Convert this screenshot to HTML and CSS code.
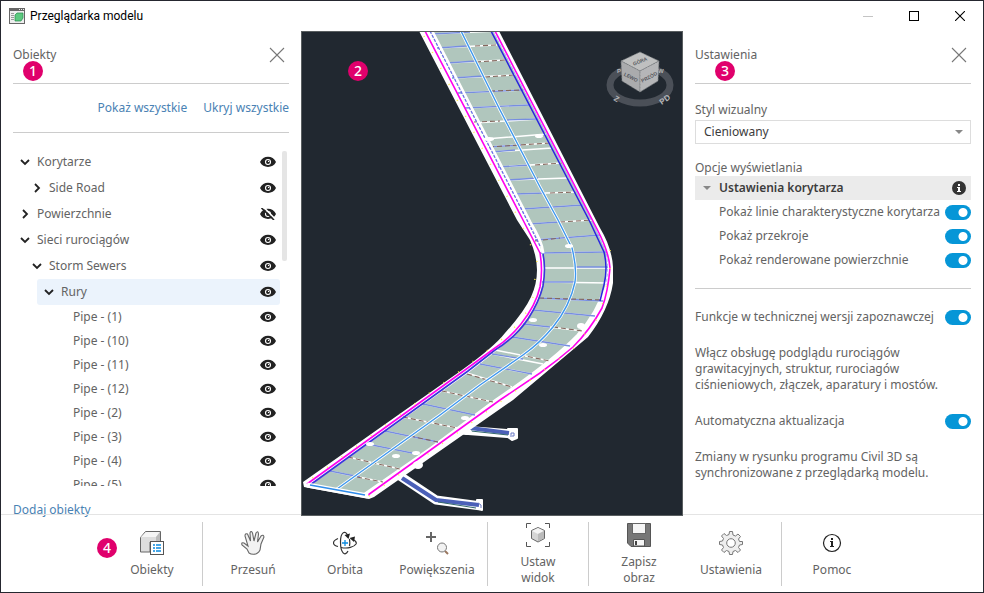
FILE: index.html
```html
<!DOCTYPE html>
<html lang="pl">
<head>
<meta charset="utf-8">
<title>Przeglądarka modelu</title>
<link rel="stylesheet" href="styles.css">
</head>
<body>
<svg class="defs" aria-hidden="true">
  <symbol id="eye" viewBox="0 0 16 12"><path d="M0 6C3 -1 13 -1 16 6C13 12.500 3 12.500 0 6Z" fill="#222"/><circle cx="8" cy="6" r="2.500" fill="none" stroke="#fff" stroke-width="1.100"/><circle cx="8.600" cy="5.400" r=".7" fill="#fff"/></symbol>
  <symbol id="eye-off" viewBox="0 0 16 12"><path d="M0 6C3 -1 13 -1 16 6C13 12.500 3 12.500 0 6Z" fill="#222"/><circle cx="8" cy="6" r="2.500" fill="none" stroke="#fff" stroke-width="1.100"/><path d="M3.500 -1L15.500 11.500" stroke="#fff" stroke-width="1.600"/><path d="M1.500 0L14 12" stroke="#222" stroke-width="1.600"/></symbol>
  <symbol id="down" viewBox="0 0 10 10"><path d="M1 3L5 7L9 3" fill="none" stroke="#222" stroke-width="1.800"/></symbol>
  <symbol id="right" viewBox="0 0 10 10"><path d="M3 1L7 5L3 9" fill="none" stroke="#222" stroke-width="1.800"/></symbol>
  <symbol id="close" viewBox="0 0 16 16"><path d="M1 1L15 15M15 1L1 15" stroke="#777" stroke-width="1.100"/></symbol>
</svg>
<div class="window">
  <header class="titlebar">
    <svg class="app-icon" width="16" height="16" viewBox="0 0 16 16"><rect x=".5" y=".5" width="15" height="15" fill="#eee" stroke="#666"/><path d="M0 0H16V3H0Z" fill="#666"/><path d="M10 1.500H11M12 1.500H13M14 1.500H15" stroke="#eee"/><path d="M2 5.500H5M2 7.500H5M2 9.500H5M2 11.500H5" stroke="#999"/><path d="M6 7L8 5H14V10L12 13H6Z" fill="#5cc97f" stroke="#248a4a" stroke-width=".7"/></svg>
    <h1 class="title">Przeglądarka modelu</h1>
    <div class="window-buttons">
      <button type="button" aria-label="Minimalizuj" disabled><svg width="10" height="10"><path d="M0 5.500H10" stroke="#c4c4c4"/></svg></button>
      <button type="button" aria-label="Maksymalizuj"><svg width="10" height="10"><rect x=".5" y=".5" width="9" height="9" fill="none" stroke="#000"/></svg></button>
      <button type="button" aria-label="Zamknij"><svg width="10" height="10"><path d="M0 0L10 10M10 0L0 10" stroke="#000" stroke-width="1.100"/></svg></button>
    </div>
  </header>

  <main class="content">
    <section class="panel objects">
      <div class="panel-head"><h2>Obiekty</h2><button type="button" class="close" aria-label="Zamknij panel obiektów"><svg width="16" height="16"><use href="#close"/></svg></button><span class="badge badge-objects">1</span></div>
      <div class="visibility-links"><a href="#">Pokaż wszystkie</a><a href="#">Ukryj wszystkie</a></div>
      <div class="tree-wrap">
        <ul class="tree">
          <li class="node"><button type="button" class="toggle" aria-label="Zwiń"><svg width="10" height="10"><use href="#down"/></svg></button><span>Korytarze</span><button type="button" class="eye" aria-label="Widoczność"><svg width="16" height="12"><use href="#eye"/></svg></button></li>
          <li class="node level-1"><button type="button" class="toggle" aria-label="Rozwiń"><svg width="10" height="10"><use href="#right"/></svg></button><span>Side Road</span><button type="button" class="eye" aria-label="Widoczność"><svg width="16" height="12"><use href="#eye"/></svg></button></li>
          <li class="node"><button type="button" class="toggle" aria-label="Rozwiń"><svg width="10" height="10"><use href="#right"/></svg></button><span>Powierzchnie</span><button type="button" class="eye" aria-label="Widoczność"><svg width="16" height="12"><use href="#eye-off"/></svg></button></li>
          <li class="node"><button type="button" class="toggle" aria-label="Zwiń"><svg width="10" height="10"><use href="#down"/></svg></button><span>Sieci rurociągów</span><button type="button" class="eye" aria-label="Widoczność"><svg width="16" height="12"><use href="#eye"/></svg></button></li>
          <li class="node level-1"><button type="button" class="toggle" aria-label="Zwiń"><svg width="10" height="10"><use href="#down"/></svg></button><span>Storm Sewers</span><button type="button" class="eye" aria-label="Widoczność"><svg width="16" height="12"><use href="#eye"/></svg></button></li>
          <li class="node level-2 selected"><button type="button" class="toggle" aria-label="Zwiń"><svg width="10" height="10"><use href="#down"/></svg></button><span>Rury</span><button type="button" class="eye" aria-label="Widoczność"><svg width="16" height="12"><use href="#eye"/></svg></button></li>
          <li class="node leaf"><span>Pipe - (1)</span><button type="button" class="eye" aria-label="Widoczność"><svg width="16" height="12"><use href="#eye"/></svg></button></li>
          <li class="node leaf"><span>Pipe - (10)</span><button type="button" class="eye" aria-label="Widoczność"><svg width="16" height="12"><use href="#eye"/></svg></button></li>
          <li class="node leaf"><span>Pipe - (11)</span><button type="button" class="eye" aria-label="Widoczność"><svg width="16" height="12"><use href="#eye"/></svg></button></li>
          <li class="node leaf"><span>Pipe - (12)</span><button type="button" class="eye" aria-label="Widoczność"><svg width="16" height="12"><use href="#eye"/></svg></button></li>
          <li class="node leaf"><span>Pipe - (2)</span><button type="button" class="eye" aria-label="Widoczność"><svg width="16" height="12"><use href="#eye"/></svg></button></li>
          <li class="node leaf"><span>Pipe - (3)</span><button type="button" class="eye" aria-label="Widoczność"><svg width="16" height="12"><use href="#eye"/></svg></button></li>
          <li class="node leaf"><span>Pipe - (4)</span><button type="button" class="eye" aria-label="Widoczność"><svg width="16" height="12"><use href="#eye"/></svg></button></li>
          <li class="node leaf"><span>Pipe - (5)</span><button type="button" class="eye" aria-label="Widoczność"><svg width="16" height="12"><use href="#eye"/></svg></button></li>
        </ul>
        <div class="scroll-thumb"></div>
      </div>
      <a href="#" class="add-objects">Dodaj obiekty</a>
    </section>

    <section class="viewport" aria-label="Widok modelu">
      <svg class="model" viewBox="302 32 380 483" preserveAspectRatio="xMidYMid slice">
        <!-- pipes -->
        <g fill="none" stroke-linejoin="round">
          <path d="M462 430L512 434M400 476L436 500L481 506" stroke="#fff" stroke-width="9"/>
          <path d="M508 429H517V438L512 440L508 437ZM477 500H482V510L477 508Z" fill="#fff" stroke="#fff" stroke-width="2"/>
          <path d="M470 428L509 433M402 478L436 500L479 505" stroke="#4b60b8" stroke-width="4"/>
          <path d="M471 431L508 435M438 502L476 508" stroke="#33686c"/>
          <path d="M511 437V433H514V436H512M478 503L481 505V508" stroke="#6879c5"/>
        </g>
        <!-- roadway -->
        <path d="M419 31L517 220L530 240Q537 256 537 270Q537 284 531 297Q524 312 505 333Q494 347 462 370L303 482L304 487L369 499L374 497L513 400L588 337Q609 310 613 283V267Q612 248 600 228L499 31Z" fill="#fff"/>
        <path d="M430 31L529 223Q544 248 544 268Q544 289 534 309Q520 329 510 339Q497 351 468 373L312 484L365 494L430 449L496 401Q552 363 578 335Q598 312 604 290Q608 268 606 252L594 224L493 31Z" fill="#b0c6bd"/>
        <path d="M365 494L430 449L496 400Q552 362 578 335Q598 312 604 290" fill="none" stroke="#fff" stroke-width="3"/>
        <g fill="none" stroke="#fff" stroke-width="1.500">
          <path d="M432 34L498 31M437 48L497 45M447 63L505 60M452 78L515 75M458 93L523 90M465 108L530 105M474 123L538 119M485 139L547 134M489 147L550 143M492 152L552 148M498 167L562 163M508 180L568 178M515 194L577 192M522 209L583 205M528 224L592 220M535 240L600 235M540 253L607 252M543 268L608 268M542 282L608 283M539 298L603 301M533 310L595 316M523 324L583 331M512 337L570 346M495 350L550 361M492 354L543 364M480 364L532 374M467 373L512 387M442 391L493 402M423 404L475 415M403 417L457 428M385 431L438 442M367 444L417 454M348 457L400 469M330 471L383 482"/>
        </g>
        <g fill="none" stroke="#778ee0" stroke-width="1.300">
          <path d="M432 34L470 32M437 48L467 46M447 63L476 61M452 78L484 76M458 93L523 90M465 108L530 105M507 120L538 119M489 147L521 145M492 152L515 150M498 167L530 165M508 180L538 178M515 194L545 193M522 209L583 205M528 224L560 222M535 240L600 235M540 253L607 252M575 267L608 267M542 282L575 282M539 298L603 301M533 310L595 316M523 324L550 327M512 337L570 346M492 354L523 359M480 364L532 374M423 404L475 415M385 431L438 442M367 444L417 454M330 471L360 477"/>
        </g>
        <g fill="none" stroke="#85685e" stroke-width="1.100" stroke-dasharray="5 3">
          <path d="M475 46L497 45M476 62L505 60M485 77L515 75M490 91L523 90M474 122L500 121M489 147L550 143M535 165L562 163M550 193L577 192M560 222L592 220M535 241L560 238M539 298L603 300M553 327L583 331M520 355L550 361M467 374L512 387M442 391L493 402M403 417L457 428M410 436L438 442M348 457L400 469M357 477L383 482"/>
        </g>
        <g fill="none" stroke-linejoin="round">
          <path d="M432 31L530 222Q542 241 543 253" stroke="#fff" stroke-width="3"/>
          <path d="M430 31L528 222L540 246" stroke="#6a6ee6" stroke-width="1.300" stroke-dasharray="3 1.500"/>
          <path d="M543 254Q546 268 543 286Q539 302 528 319Q516 337 495 350L468 371L310 485" stroke="#3a35dd" stroke-width="1.600"/>
          <path d="M491 31L590 222L604 252Q608 268 604 285L600 301" stroke="#2925dd" stroke-width="1.500"/>
          <path d="M493 31L593 224L606 252Q609 268 606 285" stroke="#a5b5ff" stroke-dasharray="3 2"/>
          <path d="M461 31L500 110L540 187L558 220L572 248Q577 268 575 282Q570 306 553 327Q540 343 523 355L480 385L440 415L337 489" stroke="#fff" stroke-width="3"/>
          <path d="M461 31L500 110L540 187L558 220L572 248Q577 268 575 282Q570 306 553 327Q540 343 523 355L480 385L440 415L337 489" stroke="#3f98ee" stroke-width="1.400"/>
          <path d="M425 31L523 220L540 253Q543 270 540 287Q536 305 521 324Q510 338 495 348L465 370L307 484" stroke="#ff00ee" stroke-width="1.600"/>
          <path d="M495 31L597 229Q609 252 610 268Q608 292 602 308Q590 330 573 347Q558 360 540 373L500 400L368 495" stroke="#ff00ee" stroke-width="1.600"/>
          <path d="M307 485L368 496" stroke="#fff" stroke-width="5"/>
          <path d="M310 485L365 495" stroke="#2f8cea" stroke-width="1.600"/>
          <path d="M424 36L522 225L537 260L532 305L510 333L475 360L307 482M610 250L610 270L600 315L574 348L550 366L368 497" stroke="#ffe94a" stroke-width="1.500" stroke-dasharray="1 17"/>
        </g>
        <g fill="#fff">
          <ellipse cx="489" cy="139" rx="5" ry="2"/><ellipse cx="539" cy="136" rx="4" ry="2"/><ellipse cx="569" cy="246" rx="4" ry="2"/><ellipse cx="533" cy="320" rx="4" ry="2"/><ellipse cx="581" cy="326" rx="4" ry="3"/><ellipse cx="543" cy="345" rx="4" ry="2"/><ellipse cx="465" cy="418" rx="4" ry="2"/><ellipse cx="396" cy="456" rx="4" ry="2"/><ellipse cx="370" cy="444" rx="4" ry="2"/><ellipse cx="416" cy="453" rx="4" ry="2"/><ellipse cx="467" cy="432" rx="5" ry="3"/><ellipse cx="418" cy="465" rx="5" ry="4"/>
        </g>
        <!-- navigation cube -->
        <ellipse cx="640" cy="85" rx="30" ry="18" fill="none" stroke="#4b5058" stroke-width="7"/>
        <g class="compass"><text x="614" y="102" transform="rotate(30 617 99)">Z</text><text x="659" y="102" transform="rotate(-35 665 99)">PD</text><text class="far" x="617" y="73">P</text><text class="far" x="658" y="73">W</text></g>
        <g stroke="#777b7e" stroke-width=".7" stroke-dasharray="2 1"><path d="M640 52L659 61L640 71L621 61Z" fill="#bfc0c0"/><path d="M621 61L640 71V92L622 81Z" fill="#aaabad"/><path d="M640 71L659 61L658 81L640 92Z" fill="#b5b6b8"/></g>
        <g class="faces"><text x="640" y="63" transform="rotate(-22 640 61)">GÓRA</text><text x="631" y="79" transform="rotate(26 631 77)">LEWO</text><text x="649" y="79" transform="rotate(-28 649 77)">PRZÓD</text></g>
      </svg>
      <span class="badge badge-view">2</span>
    </section>

    <section class="panel settings">
      <div class="panel-head"><h2>Ustawienia</h2><button type="button" class="close" aria-label="Zamknij panel ustawień"><svg width="16" height="16"><use href="#close"/></svg></button><span class="badge badge-settings">3</span></div>
      <label class="field-label first" for="style">Styl wizualny</label>
      <div class="select-wrap"><select id="style"><option>Cieniowany</option></select><svg class="arrow" width="8" height="4"><path d="M0 0H8L4 4Z" fill="#888"/></svg></div>
      <h3 class="field-label options">Opcje wyświetlania</h3>
      <div class="group-head"><button type="button" class="group-toggle"><svg width="8" height="4"><path d="M0 0H8L4 4Z" fill="#888"/></svg>Ustawienia korytarza</button><svg class="info" width="14" height="14"><circle cx="7" cy="7" r="7" fill="#333"/><path d="M6 3H8V5H6ZM5 6H8V10H9V11H5V10H6V7H5Z" fill="#fff"/></svg></div>
      <div class="switch-row sub"><label for="s1">Pokaż linie charakterystyczne korytarza</label><input id="s1" type="checkbox" role="switch" checked></div>
      <div class="switch-row sub"><label for="s2">Pokaż przekroje</label><input id="s2" type="checkbox" role="switch" checked></div>
      <div class="switch-row sub"><label for="s3">Pokaż renderowane powierzchnie</label><input id="s3" type="checkbox" role="switch" checked></div>
      <hr>
      <div class="switch-row"><label for="s4">Funkcje w technicznej wersji zapoznawczej</label><input id="s4" type="checkbox" role="switch" checked></div>
      <p>Włącz obsługę podglądu rurociągów<br>grawitacyjnych, struktur, rurociagów<br>ciśnieniowych, złączek, aparatury i mostów.</p>
      <div class="switch-row"><label for="s5">Automatyczna aktualizacja</label><input id="s5" type="checkbox" role="switch" checked></div>
      <p>Zmiany w rysunku programu Civil 3D są<br>synchronizowane z przeglądarką modelu.</p>
    </section>
  </main>

  <nav class="toolbar">
    <button type="button" class="tool"><svg width="24" height="24" viewBox="0 0 24 24"><path d="M.5 6.500L5.500 .5H20.500V11H10V21H.5Z" fill="#ddd" stroke="#666"/><path d="M1 6L6 1H20L16 6Z" fill="#f5f5f5"/><path d="M16 6L20 1V11H16Z" fill="#bbb"/><rect x="10.500" y="10.500" width="13" height="13" fill="#fff" stroke="#555"/><path d="M13 14H15M13 17H15M13 20H15M16 14H21M16 17H21M16 20H21" stroke="#0b8be0" stroke-width="1.400"/></svg><span>Obiekty</span><span class="badge badge-toolbar">4</span></button>
    <div class="separator"></div>
    <button type="button" class="tool"><svg width="24" height="24" viewBox="0 0 24 24"><path d="M8 22L6 18L1 14Q0 11 3 12L7 15L4 5Q4 2 6.500 3L9.500 10L9 2Q10 -1 11.500 2L13 10L15 2Q17 -1 17.500 3L16.500 11L20 5Q22.500 3 23 6L20 13L19 19Q17 23 13 23.300Q10 23.500 8 22Z" fill="#f2f2f2" stroke="#666" stroke-width="1.100"/></svg><span>Przesuń</span></button>
    <button type="button" class="tool"><svg width="24" height="24" viewBox="0 0 24 24"><g fill="none" stroke="#333" stroke-width="1.200"><path d="M14.500 4C12 -1 7.500 1 7.500 11C7.500 22 12 26 15 20M16.500 8C17 11 17 13 16.500 15"/><path d="M5 7.500C-1 10 -1 14 5 15.500M8 16.500C15 18 21 16 23 13C24 11 22 9.500 20 8.500"/></g><path d="M11.500 4L17 2.500L15.500 8ZM16.500 7L22 5.500L21 11Z" fill="#222"/><path d="M12 9V15M9 12H15" stroke="#0b8be0" stroke-width="1.300"/></svg><span>Orbita</span></button>
    <button type="button" class="tool"><svg width="24" height="24" viewBox="0 0 24 24"><path d="M6 1V11M1 6H11" stroke="#666" stroke-width="2"/><path d="M20 20L23 23" stroke="#9b7860" stroke-width="2"/><circle cx="17" cy="16.500" r="4.500" fill="#f2f2f2" stroke="#777"/></svg><span>Powiększenia</span></button>
    <div class="separator"></div>
    <button type="button" class="tool"><svg width="24" height="24" viewBox="0 0 24 24"><path d="M.5 5V.5H5M19 .5H23.500V5M.5 19V23.500H5M19 23.500H23.500V19" fill="none" stroke="#555"/><path d="M12 4.500L18.500 7.500V15.500L12 19L5.500 15.500V7.500Z" fill="#d5d5d5" stroke="#666"/><path d="M6 8L12 5L18 8L12 11Z" fill="#f4f4f4"/><path d="M12 11L18 8V15L12 18.500Z" fill="#bbb"/></svg><span>Ustaw<br>widok</span></button>
    <div class="separator"></div>
    <button type="button" class="tool"><svg width="24" height="24" viewBox="0 0 24 24"><path d="M.5 .5H23.500V23.500H4L.5 20Z" fill="#777" stroke="#555"/><rect x="5.500" y=".5" width="13" height="10" fill="#f5f5f5" stroke="#666"/><path d="M6.500 23V16.500H17.500V23Z" fill="#f5f5f5" stroke="#555"/><path d="M8 18H10V22H8Z" fill="#444"/></svg><span>Zapisz<br>obraz</span></button>
    <button type="button" class="tool"><svg width="24" height="24" viewBox="0 0 24 24"><path d="M10.500 .5H13.500L14 4L16.500 5L19 3L21.500 5.500L19.500 8L20.500 10.500H23.500V13.500L20.500 14L19.500 16.500L21.500 19L19 21.500L16.500 19.500L14 20.500L13.500 23.500H10.500L10 20.500L7.500 19.500L5 21.500L2.500 19L4.500 16.500L3.500 14L.5 13.500V10.500L3.500 10L4.500 7.500L2.500 5L5 2.500L7.500 4.500L10 3.500Z" fill="#eee" stroke="#777"/><circle cx="12" cy="12" r="4.300" fill="#fff" stroke="#777"/></svg><span>Ustawienia</span></button>
    <div class="separator"></div>
    <button type="button" class="tool"><svg width="24" height="24" viewBox="0 0 24 24"><circle cx="12" cy="12" r="8.500" fill="#fff" stroke="#222" stroke-width="1.200"/><path d="M11 7H13V9H11ZM10 10H13V15H14V16H10V15H11V11H10Z" fill="#222"/></svg><span>Pomoc</span></button>
  </nav>
</div>
</body>
</html>
```
FILE: styles.css
```css
* { box-sizing: border-box; }

body {
  margin: 0;
  font: 12px/16px "Noto Sans", "Open Sans", sans-serif;
  color: #636363;
}

h1, h2, h3, p, ul { margin: 0; padding: 0; font-size: 12px; font-weight: 400; }
ul { list-style: none; }
button { border: 0; padding: 0; background: none; color: inherit; font: inherit; }
svg { display: block; flex: none; }
a { color: #4a82b4; text-decoration: none; }
.defs { position: absolute; width: 0; height: 0; }

.window {
  display: grid;
  grid-template-rows: 30px minmax(0, 1fr) auto;
  height: 100vh;
  border: 1px solid #25272f;
  background: #fff;
}

.titlebar { display: flex; align-items: center; padding-left: 8px; }
.title { margin-left: 5px; color: #000; font-family: Roboto, "Noto Sans", sans-serif; }
.window-buttons { display: flex; margin-left: auto; }
.window-buttons button { display: grid; place-items: center; width: 46px; height: 28px; }

.content { display: grid; grid-template-columns: 300px minmax(0, 1fr) 300px; min-height: 0; }
.panel { display: flex; flex-direction: column; min-height: 0; padding: 0 12px; }
.panel-head {
  position: relative;
  display: flex;
  flex: none;
  align-items: center;
  justify-content: space-between;
  height: 53px;
  padding-bottom: 5px;
  border-bottom: 1px solid #ccc;
}
.close { padding: 0 4px; }

.badge {
  position: absolute;
  width: 20px;
  height: 20px;
  border-radius: 50%;
  background: #e0006c;
  color: #fff;
  font-size: 14px;
  font-weight: 500;
  line-height: 20px;
  text-align: center;
}
.badge-objects { left: 10px; top: 30px; }
.badge-view { left: 46px; top: 29px; }
.badge-settings { left: 20px; top: 30px; }
.badge-toolbar { left: -9px; top: 16px; }

.visibility-links {
  display: flex;
  flex: none;
  align-items: center;
  justify-content: flex-end;
  gap: 16px;
  height: 49px;
  border-bottom: 1px solid #ccc;
}
.tree-wrap { display: flex; flex: 1; gap: 2px; min-height: 0; margin-top: 16px; overflow: hidden; }
.tree { flex: 1; }
.node { display: flex; align-items: center; height: 26px; border-radius: 3px; }
.level-1 { margin-left: 12px; }
.level-2 { margin-left: 24px; }
.leaf { height: 24px; margin-left: 60px; }
.selected { background: #ebf3fc; }
.toggle, .eye { display: grid; place-items: center; width: 24px; height: 24px; }
.eye { margin-left: auto; }
.scroll-thumb { width: 5px; height: 110px; margin: 2px 2px 0 0; border-radius: 2px; background: #e5e5e5; }
.add-objects { flex: none; margin-top: 16px; height: 12px; }

.viewport {
  position: relative;
  z-index: 1;
  margin-bottom: -2px;
  border: 1px solid #595e60;
  background: #212830;
  overflow: hidden;
}
.model { width: 100%; height: 100%; }
.compass { fill: #b5b6b8; font: 700 8px "Liberation Sans", sans-serif; }
.far { font-size: 6px; }
.faces { fill: #55585d; font: 700 5px "Liberation Sans", sans-serif; text-anchor: middle; }

.field-label { display: block; }
.first { margin-top: 18px; }
.select-wrap { position: relative; margin-top: 2px; }
select {
  display: block;
  width: 100%;
  height: 24px;
  padding: 0 8px;
  border: 1px solid #ddd;
  border-radius: 0;
  appearance: none;
  background: #fff;
  color: #3c3c3c;
  font: inherit;
}
.arrow { position: absolute; right: 8px; top: 10px; }
.options { margin-top: 16px; }
.group-head { display: flex; align-items: center; justify-content: space-between; height: 24px; padding: 0 5px 0 8px; background: #ebebeb; }
.group-toggle { display: flex; align-items: center; gap: 8px; color: #3c3c3c; font-weight: 600; }
.switch-row { display: flex; align-items: center; justify-content: space-between; height: 24px; white-space: nowrap; }
.sub { padding-left: 24px; }
input[type="checkbox"] {
  flex: none;
  width: 26px;
  height: 15px;
  margin: 0;
  border-radius: 8px;
  appearance: none;
  background: radial-gradient(circle at 18px 50%, #fff 4px, #0696d7 5px);
}
hr { width: 100%; margin: 16px 0; border: 0; border-top: 1px solid #ccc; }
p { margin: 16px 0; }

.toolbar { display: flex; justify-content: center; padding: 7px 0 6px; border-top: 1px solid #e4e4e4; }
.tool {
  position: relative;
  display: flex;
  flex-direction: column;
  align-items: center;
  justify-content: center;
  gap: 7px;
  width: 92px;
  height: 64px;
}
.separator { width: 1px; margin: 0 4px; background: #ccc; }
```
